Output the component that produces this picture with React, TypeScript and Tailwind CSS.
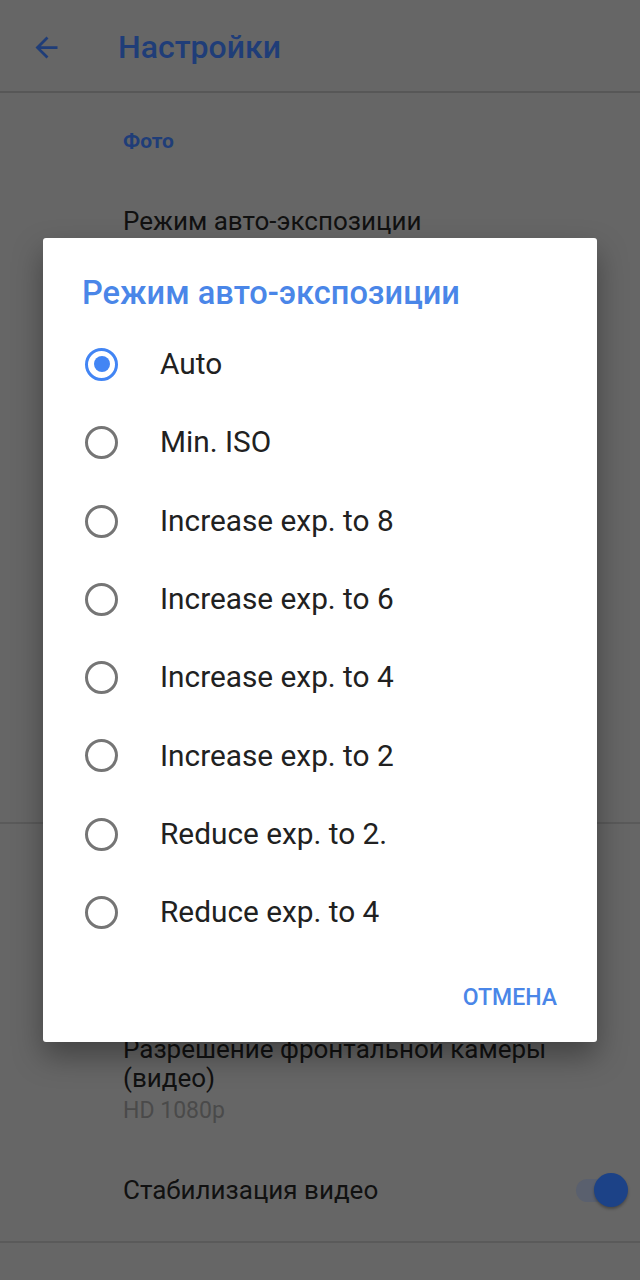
import React from 'react';

const options = [
  'Auto',
  'Min. ISO',
  'Increase exp. to 8',
  'Increase exp. to 6',
  'Increase exp. to 4',
  'Increase exp. to 2',
  'Reduce exp. to 2.',
  'Reduce exp. to 4',
];

const Radio = ({ checked }: { checked: boolean }) =>
  checked ? (
    <span className="flex h-[33px] w-[33px] shrink-0 items-center justify-center rounded-full border-[3px] border-[#4285f4]">
      <span className="h-[16px] w-[16px] rounded-full bg-[#4285f4]" />
    </span>
  ) : (
    <span className="h-[33px] w-[33px] shrink-0 rounded-full border-[3px] border-[#757575]" />
  );

const App = () => {
  return (
    <div
      className="relative h-[1280px] w-[640px] overflow-hidden bg-[#666666]"
      style={{ fontFamily: 'Roboto, "Noto Sans", sans-serif' }}
    >
      {/* toolbar */}
      <div className="flex h-[93px] items-center border-b-2 border-[#575757] pt-[3px]">
        <svg viewBox="0 0 24 24" className="ml-[30px] h-[33px] w-[33px]" fill="#1f3d78">
          <path d="M20 11H7.83l5.59-5.59L12 4l-8 8 8 8 1.41-1.41L7.83 13H20v-2z" />
        </svg>
        <span className="ml-[55px] text-[32px] font-medium text-[#1f3d78]">Настройки</span>
      </div>

      {/* settings list (dimmed) */}
      <div className="pl-[123px] text-[#111111]">
        <div className="flex h-[92px] items-center pt-[5px] text-[21px] font-bold text-[#1f3d78]">Фото</div>
        <div className="mt-[21px] flex h-[51px] items-start text-[26px] leading-[30px]">Режим авто-экспозиции</div>
      </div>
      <div className="h-[565px]" />
      <div className="border-b-2 border-[#5a5a5a]" />
      <div className="h-[211px]" />
      <div className="pl-[123px] pr-[40px] text-[#111111]">
        <div className="text-[26px] leading-[29px]">Разрешение фронтальной камеры (видео)</div>
        <div className="mt-[3px] text-[23px] leading-[30px] text-[#4a4a4a]">HD 1080p</div>
      </div>
      <div className="mt-[13px] flex h-[102px] items-center justify-between pl-[123px] pr-[12px]">
        <span className="text-[26px] text-[#111111]">Стабилизация видео</span>
        <span className="relative flex h-[34px] w-[52px] items-center">
          <span className="h-[23px] w-[38px] rounded-full bg-[#5a606e]" />
          <span className="absolute right-0 top-0 h-[34px] w-[34px] rounded-full bg-[#1c4287] shadow-[0_2px_3px_rgba(0,0,0,0.3)]" />
        </span>
      </div>
      <div className="border-b-2 border-[#5a5a5a]" />

      {/* dialog */}
      <div className="absolute inset-0 flex items-center justify-center">
        <div className="w-[554px] rounded-[3px] bg-white pb-[30px] pt-[35px] shadow-[0_14px_30px_rgba(0,0,0,0.35)]">
          <div className="pl-[39px] text-[32.6px] font-medium leading-[40px] text-[#4a86e8]">
            Режим авто-экспозиции
          </div>
          <div className="mt-[12px]">
            {options.map((o, i) => (
              <div key={o} className="flex h-[78.3px] items-center pl-[42px]">
                <Radio checked={i === 0} />
                <span className="ml-[42px] text-[29.8px] text-[#212121]">{o}</span>
              </div>
            ))}
          </div>
          <div className="mt-[32px] flex justify-end pr-[40px]">
            <span className="text-[23px] font-medium leading-[28px] text-[#4a86e8]">ОТМЕНА</span>
          </div>
        </div>
      </div>
    </div>
  );
};

export default App;
